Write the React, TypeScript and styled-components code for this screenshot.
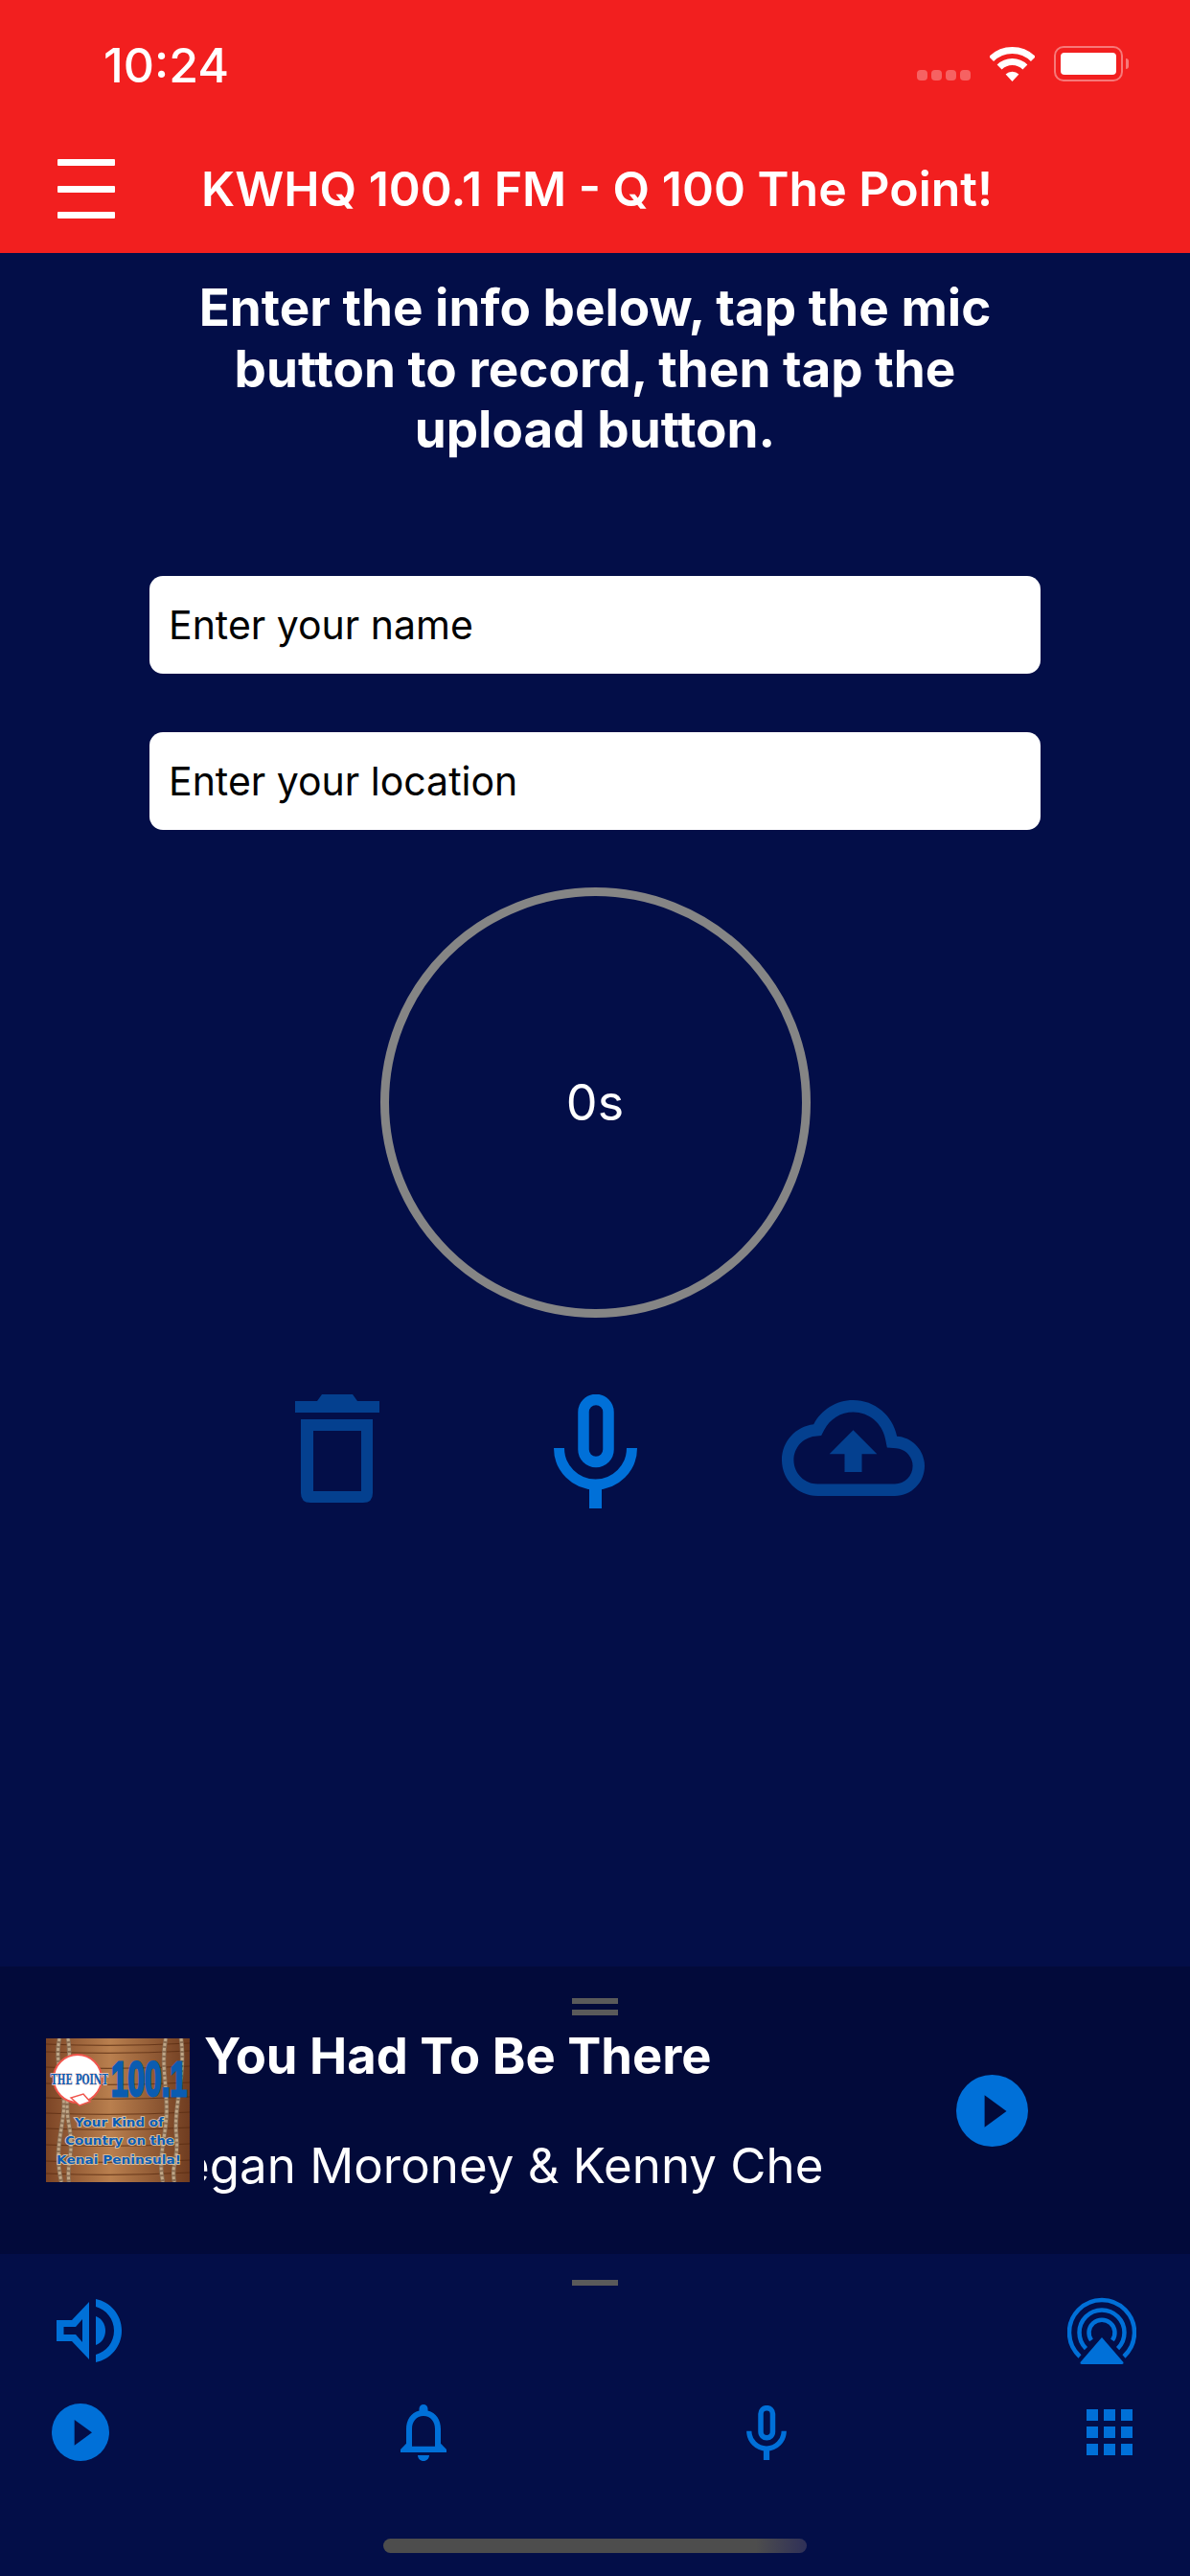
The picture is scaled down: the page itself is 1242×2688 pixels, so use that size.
import React from 'react';
import styled, { createGlobalStyle } from 'styled-components';

const BLUE = '#0070d8';
const DIM_BLUE = '#04408f';
const NAVY = '#030e48';

const GlobalStyle = createGlobalStyle`
	html, body {
		margin: 0;
		padding: 0;
		background: ${NAVY};
	}
	* {
		box-sizing: border-box;
	}
`;

function Wifi() {
	return (
		<svg width='47' height='36' viewBox='0 0 47 36' fill='none' stroke='#fff' strokeWidth='7'>
			<path d='M1.6 12.6A31 31 0 0 1 45.4 12.6' />
			<path d='M10.1 21.1A19 19 0 0 1 36.9 21.1' />
			<path d='M23.5 36L16.6 28.6A9.8 9.8 0 0 1 30.4 28.6Z' fill='#fff' stroke='none' />
		</svg>
	);
}

function Trash() {
	return (
		<svg width='88' height='113' viewBox='0 0 88 113' fill={DIM_BLUE}>
			<path d='M0 7H23L28 0H60L65 7H88V19H0Z' />
			<path
				fillRule='evenodd'
				d='M6 26H81V103Q81 113 71 113H16Q6 113 6 103ZM19 38V101H69V38Z'
			/>
		</svg>
	);
}

function Mic(props: { width: number; height: number }) {
	return (
		<svg width={props.width} height={props.height} viewBox='0 0 87 119' fill='none' stroke={BLUE}>
			<rect x='31' y='5.5' width='26' height='65' rx='13' strokeWidth='11.5' />
			<path d='M5.5 56A38 38 0 0 0 81.5 56' strokeWidth='11' />
			<path d='M43.5 94V119' strokeWidth='13' />
		</svg>
	);
}

function CloudUpload() {
	return (
		<svg width='149' height='100' viewBox='0 4 24 16' preserveAspectRatio='none' fill={DIM_BLUE}>
			<path d='M19.35 10.04C18.67 6.59 15.64 4 12 4 9.11 4 6.6 5.64 5.35 8.04 2.34 8.36 0 10.91 0 14c0 3.31 2.69 6 6 6h13c2.76 0 5-2.24 5-5 0-2.64-2.05-4.78-4.65-4.96zM19 18H6c-2.21 0-4-1.79-4-4 0-2.05 1.53-3.76 3.56-3.97l1.07-.11.5-.95C8.08 7.14 9.94 6 12 6c2.62 0 4.88 1.86 5.39 4.43l.3 1.5 1.53.11c1.56.1 2.78 1.41 2.78 2.96 0 1.65-1.35 3-3 3zM8 13h2.55v3h2.9v-3H16l-4-4z' />
		</svg>
	);
}

function PlayCircle(props: { size: number; cutout: string }) {
	return (
		<svg width={props.size} height={props.size} viewBox='0 0 60 60'>
			<circle cx='30' cy='30' r='30' fill={BLUE} />
			<path d='M23.7 17L42 30.3 23.7 43.7Z' fill={props.cutout} />
		</svg>
	);
}

function Volume() {
	return (
		<svg width='68' height='66' viewBox='0 0 68 66' fill={BLUE}>
			<path fillRule='evenodd' d='M0 22H16L34 3V63L16 44H0ZM7.5 29V37H20L27 45V21L20 29Z' />
			<path d='M41 18C47 20 51 26 51 33 51 40 47 46 41 48Z' />
			<path d='M41 0C56 3 68 16 68 33 68 50 56 63 41 66V58C52 55 60 45 60 33 60 21 52 11 41 8Z' />
		</svg>
	);
}

function Airplay() {
	return (
		<svg width='72' height='70' viewBox='0 0 72 70' fill='none' stroke={BLUE} strokeWidth='4.5'>
			<path d='M13 62A34 34 0 1 1 59 62' />
			<path d='M19.4 53.6A23.5 23.5 0 1 1 52.6 53.6' />
			<path d='M25 45A13.5 13.5 0 1 1 47 45' />
			<path d='M36 42L58.5 68Q59 70 57 70H15Q13 70 13.5 68Z' fill={BLUE} stroke='none' />
		</svg>
	);
}

function Bell() {
	return (
		<svg width='48' height='59' viewBox='4 2.5 16 19.5' preserveAspectRatio='none' fill={BLUE}>
			<path d='M12 22c1.1 0 2-.9 2-2h-4c0 1.1.9 2 2 2zm6-6v-5c0-3.07-1.63-5.64-4.5-6.32V4c0-.83-.67-1.5-1.5-1.5s-1.5.67-1.5 1.5v.68C7.64 5.36 6 7.92 6 11v5l-2 2v1h16v-1l-2-2zm-2 1H8v-6c0-2.48 1.51-4.5 4-4.5s4 2.02 4 4.5v6z' />
		</svg>
	);
}

function GridMenu() {
	const cells = [0, 18, 36];
	return (
		<svg width='48' height='48' viewBox='0 0 48 48' fill={BLUE}>
			{cells.map((y) => cells.map((x) => <rect key={`${x}-${y}`} x={x} y={y} width='12' height='12' />))}
		</svg>
	);
}

// station artwork: planks, ropes and the Q logo
function StationArt() {
	const planks = [6, 14, 30, 47, 62, 78, 94, 111, 128, 141];
	const ropes = [
		'M14 0C8 30 22 50 18 80S10 120 16 150',
		'M23 0C28 30 18 60 24 90S21 130 24 150',
		'M125 0C119 30 129 60 125 90S118 130 122 150',
		'M141 0C146 40 133 70 136 100S130 130 134 150',
	];
	const caption = {
		fontFamily: '"DejaVu Sans", sans-serif',
		fontWeight: 700,
		fontSize: 12.5,
		fill: '#0a5cb4',
		stroke: '#e0c8a6',
		strokeWidth: 1.6,
		paintOrder: 'stroke',
		lengthAdjust: 'spacingAndGlyphs',
	} as const;
	return (
		<svg width='150' height='150' viewBox='0 0 150 150'>
			<defs>
				<linearGradient id='wood' x1='0' y1='0' x2='1' y2='0'>
					<stop offset='0' stopColor='#7c4526' />
					<stop offset='0.45' stopColor='#b97f4e' />
					<stop offset='1' stopColor='#6f3c20' />
				</linearGradient>
			</defs>
			<rect width='150' height='150' fill='url(#wood)' />
			{planks.map((y) => (
				<path key={y} d={`M0 ${y}Q75 ${y + 3} 150 ${y - 1}`} stroke='#56290f' strokeWidth='1.2' fill='none' opacity='0.7' />
			))}
			{ropes.map((d) => (
				<g key={d} fill='none'>
					<path d={d} stroke='#8a6e54' strokeWidth='4.5' />
					<path d={d} stroke='#bfa687' strokeWidth='3' strokeDasharray='3 2' />
				</g>
			))}
			<circle cx='33' cy='42' r='25' fill='#fff' stroke='#f0554c' strokeWidth='2' />
			<path d='M26 62L35 70 46 66 39 58Z' fill='#fff' stroke='#f0554c' strokeWidth='1.5' />
			<text
				x='68'
				y='60'
				textLength='79'
				lengthAdjust='spacingAndGlyphs'
				fontFamily='"Liberation Sans", sans-serif'
				fontWeight='700'
				fontSize='50'
				fill='#0b5cb0'
				stroke='#0b5cb0'
				strokeWidth='3'
			>
				100.1
			</text>
			<text
				x='5'
				y='48'
				textLength='60'
				lengthAdjust='spacingAndGlyphs'
				fontFamily='"DejaVu Serif", serif'
				fontWeight='700'
				fontSize='15'
				fill='#0d5fb5'
				stroke='#f7d2cc'
				strokeWidth='1.4'
				paintOrder='stroke'
			>
				THE POINT
			</text>
			<text x='30' y='92' textLength='93' {...caption}>
				Your Kind of
			</text>
			<text x='20' y='111' textLength='114' {...caption}>
				Country on the
			</text>
			<text x='11' y='131' textLength='130' {...caption}>
				Kenai Peninsula!
			</text>
		</svg>
	);
}

export default function App() {
	return (
		<Page>
			<GlobalStyle />
			<Header>
				<StatusBar>
					<Clock>10:24</Clock>
					<StatusIcons>
						<SignalDots>
							<i />
							<i />
							<i />
							<i />
						</SignalDots>
						<Wifi />
						<Battery>
							<BatteryFill />
						</Battery>
					</StatusIcons>
				</StatusBar>
				<NavBar>
					<Hamburger>
						<i />
						<i />
						<i />
					</Hamburger>
					<NavTitle>KWHQ 100.1 FM - Q 100 The Point!</NavTitle>
				</NavBar>
			</Header>

			<Main>
				<Instructions>Enter the info below, tap the mic button to record, then tap the upload button.</Instructions>
				<Field placeholder='Enter your name' />
				<Field placeholder='Enter your location' />
				<Timer>0s</Timer>
				<RecorderControls>
					<Trash />
					<Mic width={87} height={119} />
					<CloudUpload />
				</RecorderControls>
			</Main>

			<MiniPlayer>
				<DoubleHandle>
					<i />
					<i />
				</DoubleHandle>
				<NowPlaying>
					<StationArt />
					<TrackInfo>
						<TrackTitle>You Had To Be There</TrackTitle>
						<TrackArtist>Megan Moroney &amp; Kenny Chesney</TrackArtist>
					</TrackInfo>
					<PlayCircle size={75} cutout='#020a3a' />
				</NowPlaying>
			</MiniPlayer>

			<Footer>
				<FooterHandle />
				<OutputRow>
					<Volume />
					<Airplay />
				</OutputRow>
				<TabBar>
					<TabCell>
						<PlayCircle size={60} cutout={NAVY} />
					</TabCell>
					<TabCell>
						<Bell />
					</TabCell>
					<TabCell>
						<Mic width={42} height={57} />
					</TabCell>
					<TabCell>
						<GridMenu />
					</TabCell>
				</TabBar>
				<HomeIndicator />
			</Footer>
		</Page>
	);
}

// Styled Components ...
const Page = styled.div`
	width: 1242px;
	height: 2688px;
	display: flex;
	flex-direction: column;
	overflow: hidden;
	background: ${NAVY};
	color: #fff;
	font-family: Inter, 'Noto Sans', sans-serif;
`;

const Header = styled.header`
	height: 264px;
	background: #f21f1f;
	display: flex;
	flex-direction: column;
`;
const StatusBar = styled.div`
	height: 134px;
	padding: 48px 70px 0 108px;
	display: flex;
	justify-content: space-between;
	align-items: flex-start;
`;
const Clock = styled.span`
	font-size: 50px;
	font-weight: 500;
	line-height: 40px;
`;
const StatusIcons = styled.div`
	display: flex;
	align-items: center;
	gap: 20px;
`;
const SignalDots = styled.div`
	display: flex;
	gap: 4px;
	margin-top: 24px;
	i {
		width: 11px;
		height: 11px;
		border-radius: 4px;
		background: rgba(255, 255, 255, 0.3);
	}
`;
const Battery = styled.div`
	position: relative;
	width: 72px;
	height: 37px;
	padding: 5px;
	border: 2px solid rgba(255, 255, 255, 0.4);
	border-radius: 10px;
	&::after {
		content: '';
		position: absolute;
		right: -8px;
		top: 11px;
		width: 3px;
		height: 11px;
		border-radius: 0 3px 3px 0;
		background: rgba(255, 255, 255, 0.4);
	}
`;
const BatteryFill = styled.div`
	height: 100%;
	background: #fff;
	border-radius: 4px;
`;
const NavBar = styled.div`
	flex: 1;
	padding: 0 0 4px 60px;
	display: flex;
	align-items: center;
`;
const Hamburger = styled.div`
	width: 60px;
	height: 62px;
	display: flex;
	flex-direction: column;
	justify-content: space-between;
	i {
		display: block;
		height: 7px;
		background: #fff;
		border-radius: 1px;
	}
`;
const NavTitle = styled.h1`
	margin: 0 0 0 90px;
	font-size: 50px;
	font-weight: 600;
	white-space: nowrap;
`;

const Main = styled.main`
	flex: 1;
	display: flex;
	flex-direction: column;
	align-items: center;
	padding-top: 26px;
`;
const Instructions = styled.p`
	width: 900px;
	margin: 0 0 59px;
	font-size: 53px;
	font-weight: 700;
	line-height: 63.5px;
	text-align: center;
`;
const Field = styled.input`
	width: 930px;
	height: 102px;
	margin-top: 61px;
	padding: 0 20px;
	border: 0;
	border-radius: 14px;
	background: #fff;
	font-family: inherit;
	font-size: 41px;
	color: #000;
	&::placeholder {
		color: #000;
		opacity: 1;
	}
`;
const Timer = styled.div`
	width: 449px;
	height: 449px;
	margin-top: 60px;
	border: 9px solid #858585;
	border-radius: 50%;
	display: flex;
	align-items: center;
	justify-content: center;
	font-size: 52px;
`;
const RecorderControls = styled.div`
	margin-top: 80px;
	display: grid;
	grid-template-columns: repeat(3, 269.5px);
	justify-items: center;
	align-items: start;
	svg:last-child {
		margin-top: 6px;
	}
`;

const MiniPlayer = styled.section`
	height: 300px;
	background: #020a3a;
	padding-top: 33px;
`;
const DoubleHandle = styled.div`
	width: 48px;
	margin: 0 auto 9px;
	display: flex;
	flex-direction: column;
	gap: 6px;
	i {
		height: 6px;
		background: #5a5a5a;
	}
`;
const NowPlaying = styled.div`
	height: 180px;
	padding-left: 48px;
	display: flex;
	align-items: center;
`;
const TrackInfo = styled.div`
	width: 647px;
	margin: 0 138px 0 15px;
	display: flex;
	flex-direction: column;
	gap: 51px;
	overflow: hidden;
`;
const TrackTitle = styled.div`
	font-size: 52.5px;
	font-weight: 700;
	line-height: 64px;
	white-space: nowrap;
`;
const TrackArtist = styled.div`
	margin-left: -70px;
	font-size: 51px;
	line-height: 64px;
	white-space: nowrap;
`;

const Footer = styled.footer`
	height: 336px;
	padding-top: 27px;
	display: flex;
	flex-direction: column;
`;
const FooterHandle = styled.div`
	width: 48px;
	height: 6px;
	margin: 0 auto;
	background: #5a5a5a;
`;
const OutputRow = styled.div`
	margin-top: 12px;
	padding: 0 56px 0 59px;
	height: 70px;
	display: flex;
	justify-content: space-between;
	align-items: center;
`;
const TabBar = styled.nav`
	margin-top: 41px;
	padding: 0 48px;
	display: flex;
	justify-content: space-between;
`;
const TabCell = styled.div`
	width: 72px;
	height: 60px;
	display: flex;
	align-items: center;
	justify-content: center;
`;
const HomeIndicator = styled.div`
	width: 442px;
	height: 15px;
	margin: 81px auto 0;
	border-radius: 8px;
	background: linear-gradient(to right, #4d4d4d 88%, #2f3058);
`;
